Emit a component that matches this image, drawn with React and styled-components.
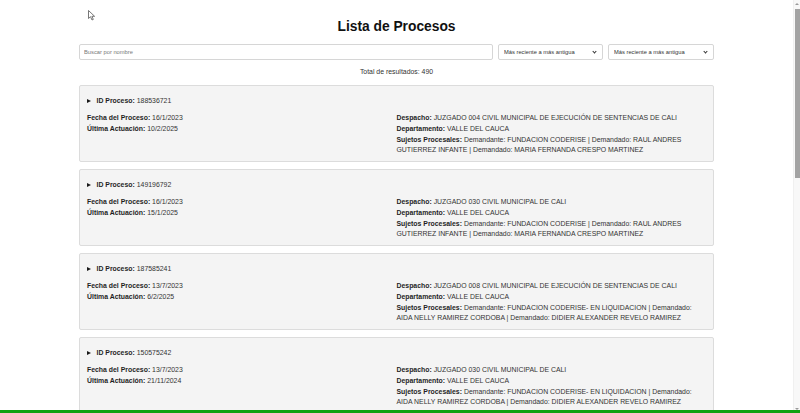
import React from 'react';
import styled, { createGlobalStyle } from 'styled-components';

const GlobalStyle = createGlobalStyle`
  html, body {
    margin: 0;
    padding: 0;
    background: #ffffff;
    font-family: "Liberation Sans", Arial, sans-serif;
    font-size: 6.9px;
    color: #333;
  }
`;

const Shell = styled.div`
  display: flex;
  height: 100vh;
  overflow: hidden;
`;

const Main = styled.main`
  flex: 1;
  min-width: 0;
  overflow-y: auto;
  scrollbar-width: none;

  &::-webkit-scrollbar {
    display: none;
  }
`;

const ScrollRail = styled.div`
  display: flex;
  flex-direction: column;
  align-items: center;
  width: 7px;
  padding: 3px 0;
  box-sizing: border-box;
  background: #f8f8f8;
  border-left: 1px solid #f0f0f0;
`;

const RailArrow = styled.span`
  width: 0;
  height: 0;
  border-left: 2px solid transparent;
  border-right: 2px solid transparent;
  ${(p) => (p.$down ? 'border-top: 2px solid #9a9a9a;' : 'border-bottom: 2px solid #9a9a9a;')}
`;

const RailThumb = styled.div`
  width: 5px;
  height: 169px;
  margin-top: 4px;
  background: #a3a3a3;
`;

const RailSpacer = styled.div`
  flex: 1;
`;

const Page = styled.div`
  max-width: 635px;
  margin: 0 auto;
  padding: 19px 0 30px;
`;

const Title = styled.h1`
  margin: 0 0 9px;
  font-size: 13.8px;
  line-height: 16px;
  font-weight: 700;
  text-align: center;
  color: #111;
`;

const Controls = styled.div`
  display: flex;
  gap: 5px;
  height: 16px;
`;

const SearchInput = styled.input`
  flex: 1;
  min-width: 0;
  box-sizing: border-box;
  height: 16px;
  padding: 0 4px;
  border: 1px solid #d6d6d6;
  border-radius: 2px;
  background: #fff;
  font-family: inherit;
  font-size: 5.75px;
  color: #333;
  outline: none;

  &::placeholder {
    color: #777;
  }
`;

const SelectWrap = styled.div`
  position: relative;
  width: ${(p) => p.$width}px;

  &::after {
    content: '';
    position: absolute;
    right: 7px;
    top: 6px;
    width: 2px;
    height: 2px;
    border-right: 1px solid #333;
    border-bottom: 1px solid #333;
    transform: rotate(45deg);
    pointer-events: none;
  }
`;

const Select = styled.select`
  appearance: none;
  width: 100%;
  height: 16px;
  box-sizing: border-box;
  padding: 0 12px 0 5px;
  border: 1px solid #d6d6d6;
  border-radius: 2px;
  background: #fff;
  font-family: inherit;
  font-size: 5.75px;
  color: #333;
  outline: none;
`;

const Results = styled.p`
  margin: 8px 0 9px;
  line-height: 8px;
  text-align: center;
  color: #333;
`;

const Card = styled.article`
  margin-bottom: 7px;
  padding: 10px 7px 5px;
  border: 1px solid #dcdcdc;
  border-radius: 2px;
  background: #f4f4f4;
`;

const Summary = styled.div`
  display: flex;
  align-items: center;
  line-height: 10px;
  cursor: pointer;
`;

const Caret = styled.span`
  width: 0;
  height: 0;
  margin-right: 5.5px;
  border-left: 4px solid #1a1a1a;
  border-top: 2.4px solid transparent;
  border-bottom: 2.4px solid transparent;
`;

const Label = styled.strong`
  font-weight: 700;
  color: #1f1f1f;
`;

const Body = styled.div`
  display: grid;
  grid-template-columns: 1fr 1fr;
  margin-top: 7px;
`;

const Column = styled.div`
  display: flex;
  flex-direction: column;
`;

const Field = styled.p`
  margin: 0 0 1px;
  line-height: 10px;
`;

const Pager = styled.div`
  display: flex;
  justify-content: center;
  gap: 4px;
  margin-top: 10px;
`;

const PageButton = styled.button`
  padding: 3px 6px;
  border: 1px solid #d6d6d6;
  border-radius: 2px;
  background: ${(p) => (p.$active ? '#e8e8e8' : '#fff')};
  font-family: inherit;
  font-size: 5.75px;
  color: #333;
`;

const ProgressBar = styled.div`
  position: fixed;
  left: 0;
  right: 0;
  bottom: 0;
  height: 3px;
  background: #12a112;
`;

const Cursor = styled.svg`
  position: fixed;
  left: 88px;
  top: 10px;
  pointer-events: none;
`;

const procesos = [
  {
    id: '188536721',
    fecha: '16/1/2023',
    ultima: '10/2/2025',
    despacho: 'JUZGADO 004 CIVIL MUNICIPAL DE EJECUCIÓN DE SENTENCIAS DE CALI',
    departamento: 'VALLE DEL CAUCA',
    sujetos:
      'Demandante: FUNDACION CODERISE | Demandado: RAUL ANDRES GUTIERREZ INFANTE | Demandado: MARIA FERNANDA CRESPO MARTINEZ',
  },
  {
    id: '149196792',
    fecha: '16/1/2023',
    ultima: '15/1/2025',
    despacho: 'JUZGADO 030 CIVIL MUNICIPAL DE CALI',
    departamento: 'VALLE DEL CAUCA',
    sujetos:
      'Demandante: FUNDACION CODERISE | Demandado: RAUL ANDRES GUTIERREZ INFANTE | Demandado: MARIA FERNANDA CRESPO MARTINEZ',
  },
  {
    id: '187585241',
    fecha: '13/7/2023',
    ultima: '6/2/2025',
    despacho: 'JUZGADO 008 CIVIL MUNICIPAL DE EJECUCIÓN DE SENTENCIAS DE CALI',
    departamento: 'VALLE DEL CAUCA',
    sujetos:
      'Demandante: FUNDACION CODERISE- EN LIQUIDACION | Demandado: AIDA NELLY RAMIREZ CORDOBA | Demandado:  DIDIER ALEXANDER REVELO RAMIREZ',
  },
  {
    id: '150575242',
    fecha: '13/7/2023',
    ultima: '21/11/2024',
    despacho: 'JUZGADO 030 CIVIL MUNICIPAL DE CALI',
    departamento: 'VALLE DEL CAUCA',
    sujetos:
      'Demandante: FUNDACION CODERISE- EN LIQUIDACION | Demandado: AIDA NELLY RAMIREZ CORDOBA | Demandado:  DIDIER ALEXANDER REVELO RAMIREZ',
  },
  {
    id: '174420118',
    fecha: '2/3/2023',
    ultima: '18/11/2024',
    despacho: 'JUZGADO 012 CIVIL MUNICIPAL DE CALI',
    departamento: 'VALLE DEL CAUCA',
    sujetos: 'Demandante: FUNDACION CODERISE | Demandado: JORGE ELIECER MOSQUERA PALACIOS',
  },
  {
    id: '162908357',
    fecha: '24/2/2023',
    ultima: '7/11/2024',
    despacho: 'JUZGADO 005 CIVIL MUNICIPAL DE EJECUCIÓN DE SENTENCIAS DE CALI',
    departamento: 'VALLE DEL CAUCA',
    sujetos: 'Demandante: FUNDACION CODERISE | Demandado: LUZ MARINA OSORIO BEDOYA',
  },
  {
    id: '139571204',
    fecha: '9/2/2023',
    ultima: '30/10/2024',
    despacho: 'JUZGADO 021 CIVIL MUNICIPAL DE CALI',
    departamento: 'VALLE DEL CAUCA',
    sujetos: 'Demandante: FUNDACION CODERISE- EN LIQUIDACION | Demandado: CARLOS ANDRES VALENCIA RUIZ',
  },
  {
    id: '181203965',
    fecha: '1/2/2023',
    ultima: '22/10/2024',
    despacho: 'JUZGADO 002 CIVIL MUNICIPAL DE EJECUCIÓN DE SENTENCIAS DE CALI',
    departamento: 'VALLE DEL CAUCA',
    sujetos: 'Demandante: FUNDACION CODERISE | Demandado: DIANA PATRICIA LOPEZ GOMEZ',
  },
];

const ProcesoCard = ({ p }) => (
  <Card>
    <Summary>
      <Caret />
      <span>
        <Label>ID Proceso:</Label> {p.id}
      </span>
    </Summary>
    <Body>
      <Column>
        <Field>
          <Label>Fecha del Proceso:</Label> {p.fecha}
        </Field>
        <Field>
          <Label>Última Actuación:</Label> {p.ultima}
        </Field>
      </Column>
      <Column>
        <Field>
          <Label>Despacho:</Label> {p.despacho}
        </Field>
        <Field>
          <Label>Departamento:</Label> {p.departamento}
        </Field>
        <Field>
          <Label>Sujetos Procesales:</Label> {p.sujetos}
        </Field>
      </Column>
    </Body>
  </Card>
);

export default function App() {
  return (
    <>
      <GlobalStyle />
      <Shell>
        <Main>
          <Page>
            <Title>Lista de Procesos</Title>
            <Controls>
              <SearchInput placeholder="Buscar por nombre" />
              <SelectWrap $width={105}>
                <Select defaultValue="desc">
                  <option value="desc">Más reciente a más antigua</option>
                  <option value="asc">Más antigua a más reciente</option>
                </Select>
              </SelectWrap>
              <SelectWrap $width={106}>
                <Select defaultValue="desc">
                  <option value="desc">Más reciente a más antigua</option>
                  <option value="asc">Más antigua a más reciente</option>
                </Select>
              </SelectWrap>
            </Controls>
            <Results>Total de resultados: 490</Results>
            {procesos.map((p) => (
              <ProcesoCard key={p.id} p={p} />
            ))}
            <Pager>
              <PageButton>Anterior</PageButton>
              <PageButton $active>1</PageButton>
              <PageButton>2</PageButton>
              <PageButton>3</PageButton>
              <PageButton>Siguiente</PageButton>
            </Pager>
          </Page>
        </Main>
        <ScrollRail>
          <RailArrow />
          <RailThumb />
          <RailSpacer />
          <RailArrow $down />
        </ScrollRail>
      </Shell>
      <ProgressBar />
      <Cursor width="8" height="11" viewBox="0 0 8 11">
        <path d="M0.5 0.5 L0.5 8.5 L2.5 6.7 L4 10 L5.3 9.4 L3.9 6.3 L6.6 6.3 Z" fill="#fff" stroke="#555" strokeWidth="0.8" strokeLinejoin="round" />
      </Cursor>
    </>
  );
}
